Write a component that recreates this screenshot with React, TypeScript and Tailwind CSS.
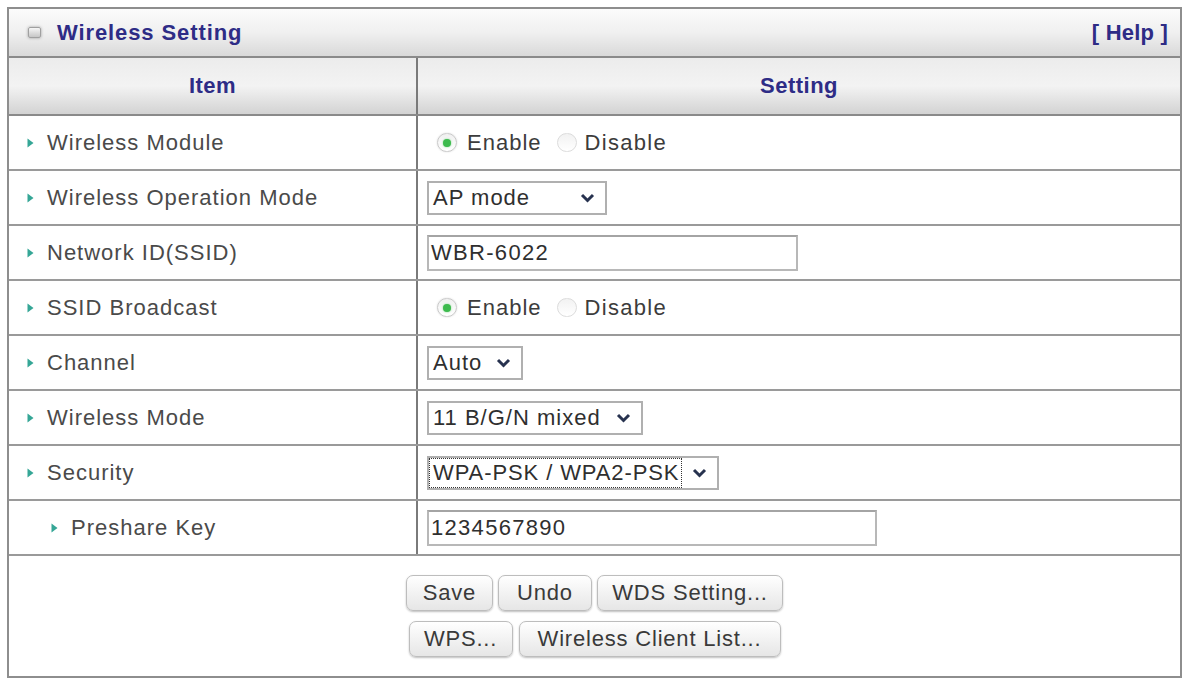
import React from 'react';

type Row =
  | { label: string; kind: 'radio'; indent?: boolean }
  | { label: string; kind: 'select'; value: string; width: string; focus?: boolean; indent?: boolean }
  | { label: string; kind: 'input'; value: string; width: string; indent?: boolean };

const rows: Row[] = [
  { label: 'Wireless Module', kind: 'radio' },
  { label: 'Wireless Operation Mode', kind: 'select', value: 'AP mode', width: 'w-[180px]' },
  { label: 'Network ID(SSID)', kind: 'input', value: 'WBR-6022', width: 'w-[371px]' },
  { label: 'SSID Broadcast', kind: 'radio' },
  { label: 'Channel', kind: 'select', value: 'Auto', width: 'w-[96px]' },
  { label: 'Wireless Mode', kind: 'select', value: '11 B/G/N mixed', width: 'w-[216px]' },
  { label: 'Security', kind: 'select', value: 'WPA-PSK / WPA2-PSK', width: 'w-[292px]', focus: true },
  { label: 'Preshare Key', kind: 'input', value: '1234567890', width: 'w-[450px]', indent: true },
];

function Bullet() {
  return (
    <svg width="7" height="10" viewBox="0 0 7 10" className="shrink-0">
      <polygon points="0.5,0.5 6.5,5 0.5,9.5" fill="#35a696" />
    </svg>
  );
}

function Chevron() {
  return (
    <svg width="15" height="10" viewBox="0 0 15 10" className="shrink-0">
      <polyline points="2,2 7.5,7.5 13,2" fill="none" stroke="#27324f" strokeWidth="3" strokeLinejoin="miter" />
    </svg>
  );
}

function Radio({ checked }: { checked: boolean }) {
  return (
    <span
      className={
        checked
          ? 'w-[20px] h-[19px] rounded-full border border-[#c9c9c9] bg-linear-to-b from-[#f0f0f0] to-white shadow-[0_0_2px_rgba(0,0,0,0.15)] flex items-center justify-center shrink-0'
          : 'w-[20px] h-[19px] rounded-full border border-[#dcdcdc] bg-linear-to-b from-[#f2f2f2] to-white shrink-0'
      }
    >
      {checked && <span className="w-[8px] h-[8px] rounded-full bg-[#3dba4e] shadow-[0_0_2px_#7fd98a]" />}
    </span>
  );
}

function Setting({ row }: { row: Row }) {
  if (row.kind === 'radio') {
    return (
      <div className="flex items-center pl-[10px]">
        <Radio checked />
        <span className="ml-[10px] mr-[15px]">Enable</span>
        <Radio checked={false} />
        <span className="ml-[8px] tracking-[1.3px]">Disable</span>
      </div>
    );
  }
  if (row.kind === 'select') {
    return (
      <div className={`${row.width} h-[34px] border-2 border-[#b0b0b0] bg-white flex items-center justify-between pr-[10px] text-[#2f2f2f]`}>
        {row.focus ? (
          <span className="h-full flex items-center pl-[3px] pr-[2px] border border-dotted border-[#333] tracking-[0.9px]">
            {row.value}
          </span>
        ) : (
          <span className="pl-[4px]">{row.value}</span>
        )}
        <Chevron />
      </div>
    );
  }
  return (
    <div className={`${row.width} h-[36px] border-2 border-[#b8b8b8] border-t-[#a4a4a4] bg-white flex items-center pl-[2px] text-[#2f2f2f] tracking-[1.3px]`}>
      {row.value}
    </div>
  );
}

function Btn({ children, w }: { children: React.ReactNode; w: string }) {
  return (
    <button
      className={`${w} h-[36px] rounded-[7px] border border-[#bdbdbd] bg-linear-to-b from-white to-[#e6e6e6] shadow-[0_1px_2px_rgba(0,0,0,0.25)] text-[#3a3a3a] flex items-center justify-center`}
    >
      {children}
    </button>
  );
}

export default function App() {
  return (
    <div className="bg-white w-[1184px] h-[682px] pl-[7px] pt-[7px] font-['Liberation_Sans',Arial,sans-serif] text-[22px] tracking-[1px] leading-none">
      <div className="w-[1175px] border-2 border-[#8e8e8e] bg-white">
        {/* title bar */}
        <div className="h-[49px] border-b-2 border-[#8a8a8a] bg-linear-to-b from-[#fbfbfb] via-[#f0f0f0] to-[#d9d9d9] flex items-center justify-between pl-[19px] pr-[12px] font-bold text-[#2e2c86]">
          <div className="flex items-center">
            <span className="w-[13px] h-[11px] rounded-[2px] border border-[#a0a0a0] bg-linear-to-b from-[#f6f6f6] to-[#c6c6c6] shadow-[0_0_3px_rgba(0,0,0,0.35)]" />
            <span className="ml-[16px] tracking-[0.9px]">Wireless Setting</span>
          </div>
          <span className="tracking-[0.2px]">[ Help ]</span>
        </div>

        {/* column header */}
        <div className="h-[58px] border-b-2 border-[#8a8a8a] bg-linear-to-b from-[#ececec] via-[#f3f3f3] to-[#d3d3d3] flex font-bold text-[#2e2c86]">
          <div className="w-[409px] border-r-2 border-[#7a7a7a] flex items-center justify-center tracking-[0.5px]">Item</div>
          <div className="flex-1 flex items-center justify-center tracking-[0.5px]">Setting</div>
        </div>

        {/* rows */}
        {rows.map((row) => (
          <div key={row.label} className="h-[55px] border-b-2 border-[#9a9a9a] flex">
            <div
              className={
                row.indent
                  ? 'w-[409px] border-r-2 border-[#7a7a7a] flex items-center pl-[42px] gap-[13px] text-[#4a4a4a]'
                  : 'w-[409px] border-r-2 border-[#7a7a7a] flex items-center pl-[18px] gap-[13px] text-[#4a4a4a]'
              }
            >
              <Bullet />
              <span>{row.label}</span>
            </div>
            <div className="flex-1 flex items-center pl-[9px] text-[#3c3c3c]">
              <Setting row={row} />
            </div>
          </div>
        ))}

        {/* buttons */}
        <div className="h-[120px] flex flex-col items-center pt-[19px] gap-[10px] tracking-[0.8px]">
          <div className="flex gap-[5px]">
            <Btn w="w-[87px]">Save</Btn>
            <Btn w="w-[94px]">Undo</Btn>
            <Btn w="w-[186px]">WDS Setting...</Btn>
          </div>
          <div className="flex gap-[6px]">
            <Btn w="w-[104px]">WPS...</Btn>
            <Btn w="w-[262px]">Wireless Client List...</Btn>
          </div>
        </div>
      </div>
    </div>
  );
}
